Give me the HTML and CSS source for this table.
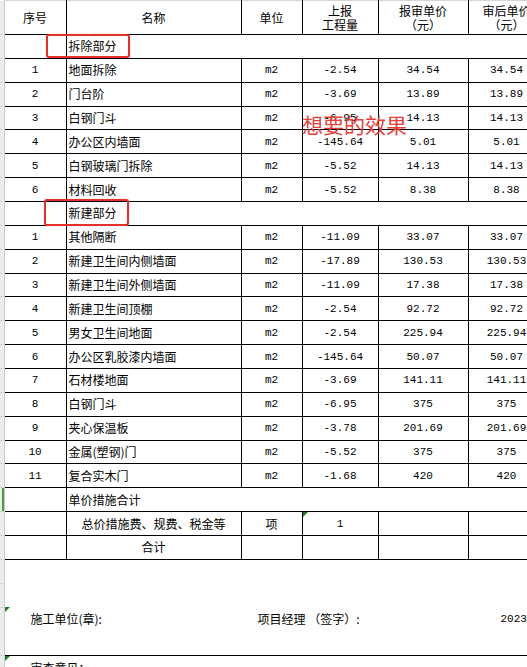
FILE: index.html
```html
<!DOCTYPE html>
<html lang="zh-CN">
<head>
<meta charset="utf-8">
<title>工程量清单</title>
<link rel="stylesheet" href="styles.css">
</head>
<body>
<div class="sheet">
  <table class="grid">
    <colgroup>
      <col class="c-rh"><col class="c-no"><col class="c-name"><col class="c-unit"><col class="c-qty"><col class="c-price"><col class="c-final">
    </colgroup>
    <thead>
      <tr class="head">
        <td class="rh"></td>
        <th class="no">序号</th>
        <th>名称</th>
        <th>单位</th>
        <th>上报<br>工程量</th>
        <th>报审单价<br>（元）</th>
        <th>审后单价<br>（元）</th>
      </tr>
    </thead>
    <tbody>
      <tr class="row"><td class="rh"></td><td class="no"></td><td class="name" colspan="5">拆除部分</td></tr>
      <tr class="row"><td class="rh"></td><td class="no num">1</td><td class="name">地面拆除</td><td class="num">m2</td><td class="num">-2.54</td><td class="num">34.54</td><td class="num">34.54</td></tr>
      <tr class="row"><td class="rh"></td><td class="no num">2</td><td class="name">门台阶</td><td class="num">m2</td><td class="num">-3.69</td><td class="num">13.89</td><td class="num">13.89</td></tr>
      <tr class="row"><td class="rh"></td><td class="no num">3</td><td class="name">白钢门斗</td><td class="num">m2</td><td class="num">-6.95</td><td class="num">14.13</td><td class="num">14.13</td></tr>
      <tr class="row"><td class="rh"></td><td class="no num">4</td><td class="name">办公区内墙面</td><td class="num">m2</td><td class="num">-145.64</td><td class="num">5.01</td><td class="num">5.01</td></tr>
      <tr class="row"><td class="rh"></td><td class="no num">5</td><td class="name">白钢玻璃门拆除</td><td class="num">m2</td><td class="num">-5.52</td><td class="num">14.13</td><td class="num">14.13</td></tr>
      <tr class="row"><td class="rh"></td><td class="no num">6</td><td class="name">材料回收</td><td class="num">m2</td><td class="num">-5.52</td><td class="num">8.38</td><td class="num">8.38</td></tr>
      <tr class="row"><td class="rh"></td><td class="no"></td><td class="name" colspan="5">新建部分</td></tr>
      <tr class="row"><td class="rh"></td><td class="no num">1</td><td class="name">其他隔断</td><td class="num">m2</td><td class="num">-11.09</td><td class="num">33.07</td><td class="num">33.07</td></tr>
      <tr class="row"><td class="rh"></td><td class="no num">2</td><td class="name">新建卫生间内侧墙面</td><td class="num">m2</td><td class="num">-17.89</td><td class="num">130.53</td><td class="num">130.53</td></tr>
      <tr class="row"><td class="rh"></td><td class="no num">3</td><td class="name">新建卫生间外侧墙面</td><td class="num">m2</td><td class="num">-11.09</td><td class="num">17.38</td><td class="num">17.38</td></tr>
      <tr class="row"><td class="rh"></td><td class="no num">4</td><td class="name">新建卫生间顶棚</td><td class="num">m2</td><td class="num">-2.54</td><td class="num">92.72</td><td class="num">92.72</td></tr>
      <tr class="row"><td class="rh"></td><td class="no num">5</td><td class="name">男女卫生间地面</td><td class="num">m2</td><td class="num">-2.54</td><td class="num">225.94</td><td class="num">225.94</td></tr>
      <tr class="row"><td class="rh"></td><td class="no num">6</td><td class="name">办公区乳胶漆内墙面</td><td class="num">m2</td><td class="num">-145.64</td><td class="num">50.07</td><td class="num">50.07</td></tr>
      <tr class="row"><td class="rh"></td><td class="no num">7</td><td class="name">石材楼地面</td><td class="num">m2</td><td class="num">-3.69</td><td class="num">141.11</td><td class="num">141.11</td></tr>
      <tr class="row"><td class="rh"></td><td class="no num">8</td><td class="name">白钢门斗</td><td class="num">m2</td><td class="num">-6.95</td><td class="num">375</td><td class="num">375</td></tr>
      <tr class="row"><td class="rh"></td><td class="no num">9</td><td class="name">夹心保温板</td><td class="num">m2</td><td class="num">-3.78</td><td class="num">201.69</td><td class="num">201.69</td></tr>
      <tr class="row"><td class="rh"></td><td class="no num">10</td><td class="name">金属(塑钢)门</td><td class="num">m2</td><td class="num">-5.52</td><td class="num">375</td><td class="num">375</td></tr>
      <tr class="row"><td class="rh"></td><td class="no num">11</td><td class="name">复合实木门</td><td class="num">m2</td><td class="num">-1.68</td><td class="num">420</td><td class="num">420</td></tr>
      <tr class="row"><td class="rh active"></td><td class="no"></td><td class="name" colspan="5">单价措施合计</td></tr>
      <tr class="row"><td class="rh"></td><td class="no"></td><td class="center">总价措施费、规费、税金等</td><td class="center">项</td><td class="num flag">1</td><td></td><td></td></tr>
      <tr class="row"><td class="rh"></td><td class="no"></td><td class="center">合计</td><td></td><td></td><td></td><td></td></tr>
      <tr class="row"><td class="rh"></td><td class="free" colspan="6"></td></tr>
      <tr class="row"><td class="rh"></td><td class="free" colspan="6"></td></tr>
      <tr class="sign"><td class="rh"></td><td class="free flag" colspan="6">
        <div class="sign-row"><span>施工单位(章):</span><span>项目经理 （签字）:</span><span class="yr">2023</span></div>
      </td></tr>
      <tr class="review"><td class="rh"></td><td class="free flag ruled" colspan="6">审查意见：</td></tr>
    </tbody>
  </table>
  <div class="note">想要的效果</div>
  <div class="mark mark-1"></div>
  <div class="mark mark-2"></div>
</div>
</body>
</html>
```

FILE: styles.css
```css
html, body {
  margin: 0;
  padding: 0;
  background: #fff;
  overflow: hidden;
}

.sheet {
  position: relative;
  width: 545px;
  font-family: "Noto Sans CJK SC", sans-serif;
  font-size: 12px;
  color: #000;
}

.grid {
  border-collapse: collapse;
  table-layout: fixed;
  width: 545px;
}

.c-rh { width: 4px; }
.c-no { width: 62px; }
.c-name { width: 175px; }
.c-unit { width: 61px; }
.c-qty { width: 76px; }
.c-price { width: 90px; }
.c-final { width: 77px; }

.grid td, .grid th {
  border: 1px solid #000;
  padding: 0 2px;
  white-space: nowrap;
  overflow: hidden;
  vertical-align: middle;
  text-align: center;
  font-weight: normal;
  line-height: 14px;
}

.head { height: 34px; }
.head th, .head td { border-top: 1px solid #d6d6d6; }

.row { height: 23.86px; }

.grid .rh {
  padding: 0;
  background: #ececec;
  border: none;
  border-right: 1px solid #cdcdcd;
  border-bottom: 1px solid #d6d6d6;
}
.grid .rh.active { box-shadow: inset -2px 0 0 #4e9a3e; }

.grid .no { border-left: none; }

.grid .name {
  text-align: left;
  padding-left: 2px;
}

.grid .num {
  font-family: "Liberation Mono", monospace;
  font-size: 11px;
}

.grid .free {
  border: none;
  text-align: left;
}

.flag { position: relative; }
.flag::before {
  content: "";
  position: absolute;
  left: 0;
  top: 0;
  border-top: 5px solid #1f7a2c;
  border-right: 5px solid transparent;
}

.sign { height: 48px; }
.grid .sign .free { vertical-align: top; padding: 0; }
.sign-row {
  display: grid;
  grid-template-columns: 227px 243px auto;
  padding-left: 26px;
  line-height: 24px;
  text-align: left;
}
.yr {
  font-family: "Liberation Mono", monospace;
  font-size: 11px;
}

.review { height: 24px; }
.grid .review .ruled {
  border-top: 1px solid #000;
  vertical-align: top;
  text-align: left;
  padding: 5px 0 0 26px;
  line-height: 14px;
}

.note {
  position: absolute;
  left: 302px;
  top: 112px;
  font-size: 21px;
  line-height: 24px;
  color: #e5403a;
  white-space: nowrap;
}

.mark {
  position: absolute;
  box-sizing: border-box;
  border: 2px solid #e3302b;
  border-radius: 3px;
  box-shadow: 0 0 1px rgba(227, 48, 43, 0.6);
}
.mark-1 { left: 46px; top: 34px; width: 84px; height: 24px; }
.mark-2 { left: 44px; top: 199px; width: 85px; height: 27px; }
```
